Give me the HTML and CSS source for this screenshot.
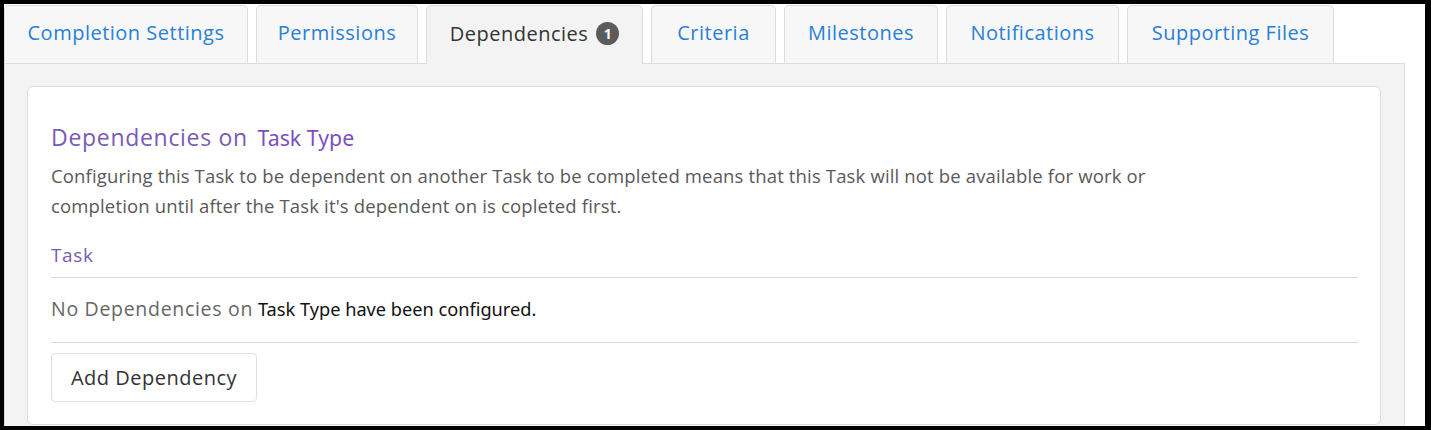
FILE: index.html
```html
<!DOCTYPE html>
<html lang="en">
<head>
<meta charset="utf-8">
<title>Dependencies</title>
<link rel="stylesheet" href="styles.css">
</head>
<body>
<div class="frame">
  <div class="tabs">
    <div class="tab tab-completion">Completion Settings</div>
    <div class="tab tab-permissions">Permissions</div>
    <div class="tab tab-dependencies active">Dependencies <span class="badge">1</span></div>
    <div class="tab tab-criteria">Criteria</div>
    <div class="tab tab-milestones">Milestones</div>
    <div class="tab tab-notifications">Notifications</div>
    <div class="tab tab-files">Supporting Files</div>
  </div>
  <div class="panel">
    <div class="card">
      <h2 class="heading">Dependencies on <span class="type">Task Type</span></h2>
      <p class="desc">Configuring this Task to be dependent on another Task to be completed means that this Task will not be available for work or completion until after the Task it's dependent on is copleted first.</p>
      <div class="col-head">Task</div>
      <div class="empty-row"><span class="muted">No Dependencies on</span> <span class="plain">Task Type have been configured.</span></div>
      <button class="btn" type="button">Add Dependency</button>
    </div>
  </div>
</div>
</body>
</html>
```
FILE: styles.css
```css
html, body {
  margin: 0;
  padding: 0;
  background: #000;
}
.frame {
  width: 1431px;
  height: 430px;
  box-sizing: border-box;
  border-style: solid;
  border-color: #000;
  border-width: 4px 6px 4px 4px;
  background: #fff;
  overflow: hidden;
  font-family: "Open Sans", "Noto Sans", sans-serif;
}
.tabs {
  display: flex;
  gap: 8px;
  margin-top: 1px;
}
.tab {
  flex: none;
  height: 58px;
  box-sizing: border-box;
  display: flex;
  align-items: center;
  justify-content: center;
  padding: 0 0 4px;
  border: 1px solid #dcdcdc;
  border-bottom: none;
  border-radius: 5px 5px 0 0;
  background: #f7f7f7;
  color: #2a7fd4;
  font-size: 20px;
  letter-spacing: 0.5px;
  white-space: nowrap;
}
.tab-completion { width: 244px; }
.tab-permissions { width: 162px; }
.tab-dependencies { width: 217px; }
.tab-criteria { width: 125px; }
.tab-milestones { width: 154px; }
.tab-notifications { width: 173px; }
.tab-files { width: 207px; }
.tab.active {
  background: #f3f3f3;
  color: #333;
  height: 59px;
  margin-bottom: -1px;
  position: relative;
  z-index: 1;
}
.badge {
  display: inline-flex;
  align-items: center;
  justify-content: center;
  width: 23px;
  height: 23px;
  margin-left: 8px;
  border-radius: 50%;
  background: #5b5b5b;
  color: #fff;
  font-size: 14px;
  font-weight: 700;
  letter-spacing: 0;
}
.panel {
  width: 1401px;
  box-sizing: border-box;
  background: #f3f3f3;
  border: 1px solid #dcdcdc;
  padding: 22px 23px 30px 22px;
}
.card {
  background: #fff;
  border: 1px solid #dcdcdc;
  border-radius: 6px;
  padding: 35px 22px 22px 23px;
}
.heading {
  margin: 0;
  font-weight: 400;
  font-size: 23px;
  line-height: 30px;
  letter-spacing: 0.7px;
  color: #7a5bb5;
}
.type {
  margin-left: 3px;
  font-family: "Noto Sans", "Open Sans", sans-serif;
  font-size: 21.3px;
  letter-spacing: 0;
  color: #7a50bd;
}
.desc {
  margin: 8px 0 0;
  max-width: 1180px;
  font-size: 18.5px;
  line-height: 30px;
  letter-spacing: 0.15px;
  color: #595959;
}
.col-head {
  margin-top: 19px;
  padding-bottom: 7px;
  border-bottom: 1px solid #d9d9d9;
  font-size: 19px;
  line-height: 30px;
  letter-spacing: 0.6px;
  color: #7a5bb5;
}
.empty-row {
  padding: 16px 0 18px;
  border-bottom: 1px solid #d9d9d9;
  font-size: 18.5px;
  line-height: 30px;
}
.muted {
  font-size: 19.5px;
  color: #666;
  letter-spacing: 0.7px;
}
.plain {
  font-family: "Noto Sans", "Open Sans", sans-serif;
  font-size: 18.2px;
  color: #111;
}
.btn {
  display: block;
  margin-top: 10px;
  width: 206px;
  height: 49px;
  box-sizing: border-box;
  background: #fff;
  border: 1px solid #e1e1e1;
  border-radius: 4px;
  font-family: "Open Sans", sans-serif;
  font-size: 20px;
  letter-spacing: 0.5px;
  color: #333;
  padding: 0;
  cursor: pointer;
}
```
